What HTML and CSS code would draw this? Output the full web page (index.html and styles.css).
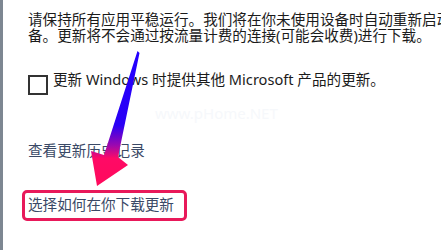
FILE: index.html
```html
<!DOCTYPE html>
<html lang="zh-CN">
<head>
    <meta charset="UTF-8">
    <title>Windows 更新</title>
    <link rel="stylesheet" href="styles.css">
</head>
<body>
    <div class="page">
        <p class="note">请保持所有应用平稳运行。我们将在你未使用设备时自动重新启动设<br>备。更新将不会通过按流量计费的连接(可能会收费)进行下载。</p>

        <div class="check">
            <span class="box"></span>
            <span>更新 Windows 时提供其他 Microsoft 产品的更新。</span>
        </div>

        <div class="history">查看更新历史记录</div>

        <div class="choose">选择如何在你下载更新</div>
    </div>

    <div class="mark">www.pHome.NET</div>

    <svg class="arrow" width="441" height="250" viewBox="0 0 441 250">
        <defs>
            <linearGradient id="g" x1="0" y1="52" x2="0" y2="185" gradientUnits="userSpaceOnUse">
                <stop offset="0" stop-color="#2400ff"/>
                <stop offset="0.55" stop-color="#2a00f5"/>
                <stop offset="0.7" stop-color="#9a08b0"/>
                <stop offset="0.8" stop-color="#ff0a66"/>
                <stop offset="1" stop-color="#ff0a5c"/>
            </linearGradient>
        </defs>
        <polygon fill="url(#g)" points="137.5,51 139.5,53 118,157 128,165 97,186 91,151 104,155"/>
    </svg>
</body>
</html>
```

FILE: styles.css
```css
body { margin: 0; position: relative; background: #fff; color: #1b1b1b; font-family: "Noto Sans", "Noto Sans CJK SC", sans-serif; font-size: 14.6px; line-height: 15.5px; }
.page { height: 250px; box-sizing: border-box; border-left: 3px solid #7d8792; padding: 12px 0 0 25px; overflow: hidden; }
.note { margin: 0; white-space: nowrap; }
.check { display: flex; align-items: flex-start; gap: 5px; margin-top: 29px; white-space: nowrap; }
.box { flex: none; width: 20px; height: 20px; box-sizing: border-box; border: 2px solid #333; margin-top: 3px; }
.history { margin-top: 48px; color: #3a4966; }
.choose { display: inline-block; margin: 31px 0 0 -6px; padding: 4px 10px 6px 3px; border: 3px solid #e8195a; border-radius: 5px; color: #3a4966; }
.mark { position: absolute; left: 155px; top: 106px; font-size: 15px; color: #f6f8fb; }
.arrow { position: absolute; left: 0; top: 0; }
```
